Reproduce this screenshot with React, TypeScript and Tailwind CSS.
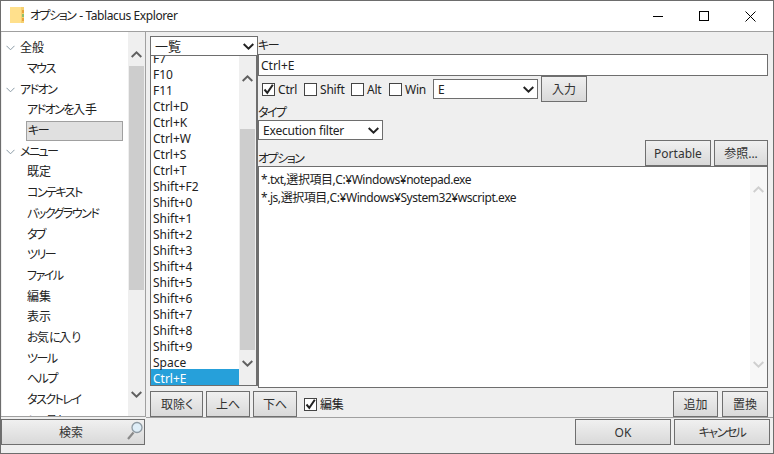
import React from "react";

const font = "font-['Noto_Sans','Noto_Sans_CJK_JP',sans-serif] [font-feature-settings:'palt']";

const tree: [string, number][] = [
  ["全般", 0],
  ["マウス", 1],
  ["アドオン", 0],
  ["アドオンを入手", 1],
  ["キー", 2],
  ["メニュー", 0],
  ["既定", 1],
  ["コンテキスト", 1],
  ["バックグラウンド", 1],
  ["タブ", 1],
  ["ツリー", 1],
  ["ファイル", 1],
  ["編集", 1],
  ["表示", 1],
  ["お気に入り", 1],
  ["ツール", 1],
  ["ヘルプ", 1],
  ["タスクトレイ", 1],
  ["システム", 1],
];

const keys = [
  "F10", "F11", "Ctrl+D", "Ctrl+K", "Ctrl+W", "Ctrl+S", "Ctrl+T", "Shift+F2",
  "Shift+0", "Shift+1", "Shift+2", "Shift+3", "Shift+4", "Shift+5", "Shift+6",
  "Shift+7", "Shift+8", "Shift+9", "Space",
];

// the reference's kana are much narrower than Noto's, kanji are not
function Jp({ text }: { text: string }) {
  const parts = text.split(/([\u3040-\u30ff]+)/);
  return (
    <>
      {parts.map((p, i) =>
        i % 2 ? (
          <span key={i} className="tracking-[-1.5px]">{p}</span>
        ) : (
          <span key={i}>{p}</span>
        )
      )}
    </>
  );
}

function Chevron({ up, className }: { up?: boolean; className?: string }) {
  return (
    <svg width="11" height="7" viewBox="0 0 11 7" className={className}>
      <path
        d={up ? "M0.7 6 L5.5 1.4 L10.3 6" : "M0.7 1 L5.5 5.6 L10.3 1"}
        fill="none"
        stroke="currentColor"
        strokeWidth="2"
      />
    </svg>
  );
}

function Btn({ children, className }: { children: React.ReactNode; className?: string }) {
  return (
    <button
      className={`flex shrink-0 items-center justify-center border border-[#6f6f6f] bg-gradient-to-b from-[#f0f0f0] to-[#d9d9d9] pt-px text-xs text-[#333] ${className ?? ""}`}
    >
      {children}
    </button>
  );
}

function Check({ on, label, className }: { on?: boolean; label: string; className?: string }) {
  return (
    <label className={`flex items-center gap-[3px] ${className ?? ""}`}>
      <span className="flex h-[13px] w-[13px] shrink-0 items-center justify-center border border-[#444] bg-white">
        {on && (
          <svg width="11" height="11" viewBox="0 0 11 11">
            <path d="M1.5 5.5 L4.3 8.8 L9.8 0.8" fill="none" stroke="#222" strokeWidth="2" />
          </svg>
        )}
      </span>
      <span className="pt-[2px] tracking-[-0.2px]">{label}</span>
    </label>
  );
}

function Select({ value, className }: { value: string; className?: string }) {
  return (
    <div className={`flex shrink-0 items-center justify-between border border-[#6e6e6e] bg-white pl-1 pr-[3px] ${className ?? ""}`}>
      <span className="pt-px">{value}</span>
      <Chevron className="text-[#222]" />
    </div>
  );
}

export default function App() {
  return (
    <div className={`flex h-[454px] w-[774px] flex-col overflow-hidden border border-[#6d6d6d] bg-[#efefef] text-xs text-[#222] ${font}`}>
      {/* title bar */}
      <div className="flex h-[31px] shrink-0 items-center border-b border-[#a0a0a0] bg-white">
        <svg width="16" height="16" viewBox="0 0 16 16" className="ml-[9px] -mt-[2px]">
          <rect x="0" y="0" width="14" height="16" fill="#ffe08c" />
          <rect x="11" y="0" width="3" height="16" fill="#f5d070" />
          <rect x="12" y="3" width="2" height="3" fill="#e8a33c" />
          <rect x="12" y="7" width="2" height="3" fill="#8fbf6a" />
          <rect x="12" y="11" width="2" height="3" fill="#e8a33c" />
        </svg>
        <span className="ml-[4px] text-[12px] text-[#222]">
          <Jp text="オプション" />
          <span className="ml-[4px] tracking-[-0.4px]">- Tablacus Explorer</span>
        </span>
        <div className="ml-auto flex items-center text-black">
          <div className="flex w-[46px] justify-center">
            <div className="h-px w-[10px] bg-black" />
          </div>
          <div className="flex w-[46px] justify-center">
            <div className="h-[10px] w-[10px] border border-black" />
          </div>
          <div className="flex w-[46px] justify-center">
            <svg width="11" height="11" viewBox="0 0 11 11">
              <path d="M0.5 0.5 L10.5 10.5 M10.5 0.5 L0.5 10.5" stroke="#000" />
            </svg>
          </div>
        </div>
      </div>

      <div className="flex min-h-0 flex-1">
        {/* left column */}
        <div className="flex w-[145px] shrink-0 flex-col">
          <div className="flex h-[385px] shrink-0 overflow-hidden border-b border-r border-[#a0a0a0] pl-px">
            <div className="min-w-0 flex-1 overflow-hidden bg-white pt-[6px]">
              {tree.map(([name, level]) => (
                <div key={name} className="flex h-[20.7px] shrink-0 items-center">
                  {level === 0 ? (
                    <div className="flex items-center pl-[4px]">
                      <svg width="9" height="6" viewBox="0 0 9 6" className="mr-[5px]">
                        <path d="M0.5 0.8 L4.5 4.8 L8.5 0.8" fill="none" stroke="#8a9aa5" />
                      </svg>
                      <span><Jp text={name} /></span>
                    </div>
                  ) : level === 2 ? (
                    <div className="ml-[24px] flex h-[20px] w-[97px] items-center border border-[#a0a0a0] bg-[#e0e0e0] pl-px"><Jp text={name} /></div>
                  ) : (
                    <span className="pl-[25px]"><Jp text={name} /></span>
                  )}
                </div>
              ))}
            </div>
            <div className="flex w-[17px] shrink-0 flex-col items-center bg-[#efefef] text-[#606060]">
              <div className="mt-[14px] flex h-[17px] shrink-0 items-center"><Chevron up /></div>
              <div className="mt-[3px] h-[224px] w-[15px] bg-[#cdcdcd]" />
              <div className="mb-[13px] mt-auto flex h-[17px] shrink-0 items-center"><Chevron /></div>
            </div>
          </div>
          <Btn className="relative mt-[2px] h-[26px] w-[144px] pr-[4px]">
            検索
            <svg width="18" height="20" viewBox="0 0 18 20" className="absolute right-0 top-[1px]">
              <path d="M2 18 L7.5 11.5" stroke="#8a8a8a" strokeWidth="2.2" />
              <circle cx="11" cy="6.5" r="5" fill="#dfeef8" stroke="#8e9aa3" strokeWidth="1.3" />
            </svg>
          </Btn>
        </div>

        {/* right area */}
        <div className="flex min-w-0 flex-1 flex-col">
          <div className="flex h-[386px] shrink-0 flex-col border-b border-[#a0a0a0] pl-[4px] pr-[5px]">
            <div className="flex h-[356px] shrink-0">
              {/* key list */}
              <div className="flex w-[108px] shrink-0 flex-col pt-[4px]">
                <Select value="一覧" className="h-[20px] text-[13px]" />
                <div className="flex h-[330px] border-b border-l border-r-2 border-[#6e6e6e] bg-white">
                  <div className="min-w-0 flex-1 overflow-hidden">
                    <div className="-mt-[7px] flex h-[16px] items-center pl-[2px] pt-[3px]">F7</div>
                    {keys.map((k) => (
                      <div key={k} className="flex h-[16px] items-center pl-[2px] pt-[3px]">{k}</div>
                    ))}
                    <div className="flex h-[16px] items-center bg-[#26a0da] pl-[2px] pt-[3px] text-white">Ctrl+E</div>
                  </div>
                  <div className="flex w-[17px] shrink-0 flex-col items-center bg-[#efefef] text-[#606060]">
                    <div className="mt-[14px] flex h-[16px] items-center"><Chevron up /></div>
                    <div className="mt-[43px] h-[221px] w-[15px] bg-[#cdcdcd]" />
                    <div className="mb-[14px] mt-auto flex h-[16px] items-center"><Chevron /></div>
                  </div>
                </div>
              </div>
              {/* key detail */}
              <div className="flex min-w-0 flex-1 flex-col">
                <div className="mt-[6px] h-[16px] leading-[16px]"><Jp text="キー" /></div>
                <div className="flex h-[22px] shrink-0 items-center border border-[#6e6e6e] bg-white pl-[2px] pt-px">Ctrl+E</div>
                <div className="flex h-[26px] shrink-0 items-center pl-[4px]">
                  <Check on label="Ctrl" className="w-[42px]" />
                  <Check label="Shift" className="w-[47px]" />
                  <Check label="Alt" className="w-[38px]" />
                  <Check label="Win" className="w-[44px]" />
                  <Select value="E" className="h-[20px] w-[105px]" />
                  <Btn className="ml-[3px] h-[26px] w-[46px]">入力</Btn>
                </div>
                <div className="mt-[2px] h-[16px] leading-[18px]"><Jp text="タイプ" /></div>
                <Select value="Execution filter" className="h-[20px] w-[125px] tracking-[-0.2px]" />
                <div className="flex h-[26px] shrink-0 items-end justify-between">
                  <span className="leading-[14px]"><Jp text="オプション" /></span>
                  <div className="flex gap-[3px]">
                    <Btn className="h-[26px] w-[66px]">Portable</Btn>
                    <Btn className="h-[26px] w-[54px]">参照...</Btn>
                  </div>
                </div>
                <div className="flex h-[222px] shrink-0 border border-[#6e6e6e] bg-white">
                  <div className="min-w-0 flex-1 pl-[2px] pt-[4px] leading-[18px] tracking-[-0.45px]">
                    <div>*.txt,選択項目,C:¥Windows¥notepad.exe</div>
                    <div>*.js,選択項目,C:¥Windows¥System32¥wscript.exe</div>
                  </div>
                  <div className="flex w-[17px] shrink-0 flex-col items-center bg-[#f7f7f7] text-[#cfcfcf]">
                    <div className="mt-[14px] flex h-[16px] items-center"><Chevron up /></div>
                    <div className="mb-[15px] mt-auto flex h-[16px] items-center"><Chevron /></div>
                  </div>
                </div>
              </div>
            </div>
            {/* list and option buttons */}
            <div className="mt-[3px] flex items-center">
              <Btn className="h-[26px] w-[53px]"><Jp text="取除く" /></Btn>
              <Btn className="ml-[3px] h-[26px] w-[44px]">上へ</Btn>
              <Btn className="ml-[3px] h-[26px] w-[44px]">下へ</Btn>
              <Check on label="編集" className="ml-[7px]" />
              <div className="ml-auto flex gap-[4px]">
                <Btn className="h-[26px] w-[45px]">追加</Btn>
                <Btn className="h-[26px] w-[46px]">置換</Btn>
              </div>
            </div>
          </div>
          <div className="flex justify-end gap-[3px] pr-[3px] pt-px">
            <Btn className="h-[26px] w-[96px]">OK</Btn>
            <Btn className="h-[26px] w-[96px]"><Jp text="キャンセル" /></Btn>
          </div>
        </div>
      </div>
    </div>
  );
}
